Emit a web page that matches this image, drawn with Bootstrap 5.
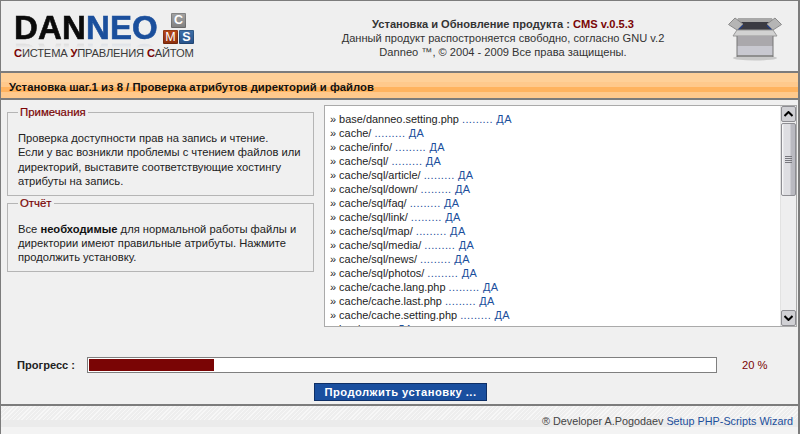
<!DOCTYPE html>
<html lang="ru">
<head>
<meta charset="utf-8">
<title>Danneo</title>
<link href="https://cdn.jsdelivr.net/npm/bootstrap@5.3.0/dist/css/bootstrap.min.css" rel="stylesheet">
<style>
html,body{height:434px;overflow:hidden}
body{font-family:"Liberation Sans",Arial,sans-serif;font-size:11.2px;line-height:14px;color:#222;background:#f0f0f0}
.shell{height:434px;border:solid #7c7c7c;border-width:1px 1px 0 1px;border-right-width:2px}
.head{height:72px;background:#efefef;border-bottom:2px solid #7c7c7c;flex:none}
.logo-wrap{width:260px;padding:9px 0 0 13px;flex:none}
.logo-top{height:36px;gap:5px}
.logo-word{font-size:33px;line-height:36px;font-weight:700;letter-spacing:.15px;color:#0b0b0b;-webkit-text-stroke:.6px currentColor;-webkit-box-reflect:below -9px linear-gradient(transparent 70%,rgba(0,0,0,.22))}
.logo-word b{color:#1b4f9c;font-weight:700}
.cube-grid{width:31px;display:grid;grid-template-columns:15px 15px;grid-template-rows:15px 14px;gap:2px 1px;margin-top:3px;height:31px}
.cube{display:flex;align-items:center;justify-content:center;color:#fff;font-size:12.5px;line-height:1;border-radius:1px;box-shadow:inset 0 0 0 1px rgba(0,0,0,.18)}
.cube-c{grid-column:1/span 2;width:15px;height:15px;background:linear-gradient(#a4a4a4,#808080);margin-left:8px;font-weight:700}
.cube-m{background:linear-gradient(#b8481a,#8c2f0d)}
.cube-s{background:linear-gradient(#3f70a8,#27528a);font-weight:700}
.logo-sub{font-size:11.2px;line-height:14px;margin-top:0;color:#3a3a3a;letter-spacing:-.2px;white-space:nowrap}
.logo-sub b{color:#7a0505;font-weight:700}
.head-text{font-size:11.1px;line-height:14px;color:#333;text-align:center;padding:16px 0 0 0;width:340px;margin-left:72px;white-space:nowrap}
.head-text strong{color:#333;font-weight:700}
.head-text em{font-style:normal;font-weight:700;color:#7a0505}
.box-ico{margin:16px 0 0 55px;flex:none}
.band{height:27px;flex:none;border-bottom:2px solid #7c7c7c;background:linear-gradient(#ffd098 0,#ffd098 9px,#ffc98c 9px,#ffc98c 14px,#ffb35f 14px,#ffb35f 19px,#ffc98c 19px,#ffc98c 100%);font-weight:700;font-size:11.3px;color:#111;padding:7px 0 0 8px}
.content{flex:none;height:227px;background:#f0f0f0}
.side{width:307px;margin:0 0 0 6px;flex:none}
.note{border:1px solid #b5b5b5;margin:6px 0 0;padding:0 0 0 10px;min-width:0}
.note + .note{margin-top:1px}
.note legend{float:none;width:auto;font-size:11.4px;line-height:13px;color:#7a0505;font-weight:400;margin:0;padding:0 2px;-webkit-text-stroke:.2px #7a0505}
.note-body{margin:12px 8px 6px 0;font-size:11.2px;line-height:14.4px;color:#222}
.note-body b{color:#111}
.listbox{width:473px;height:222px;margin:5px 0 0 10px;border:1px solid #aaa;background:#fff;flex:none}
.listrows{flex:1;overflow:hidden;padding:6px 0 0 5px;font-size:10.95px;line-height:14px;white-space:nowrap;color:#1d1d1d}
.listrows span{color:#1b4f9c;letter-spacing:.4px}
.sb{width:16px;flex:none;background:#eeeeef;border-left:1px solid #e2e2e2}
.sb-btn{height:16px;background:#d0d0d4;border:1px solid #8d8d92;border-radius:2px;display:flex;align-items:center;justify-content:center;flex:none}
.sb-thumb{height:73px;margin-top:1px;background:linear-gradient(90deg,#fff 0,#dedee2 2px,#dedee2 8px,#b9b9c0 9px,#b9b9c0 13px,#fff 15px);border:1px solid #8d8d92;border-radius:2px;display:flex;align-items:center;justify-content:center;flex:none}
.grip{width:7px;height:8px;background:repeating-linear-gradient(#77777d 0,#77777d 1px,transparent 1px,transparent 2px)}
.prog{flex:none;height:77px;background:#f0f0f0;overflow:hidden}
.prog-row{height:16px;margin-top:30px;padding-left:16px}
.prog-label{width:70px;flex:none;font-weight:700;color:#222;font-size:11.1px}
.track{width:630px;height:16px;border:1px solid #7f7f7f;background:#fff;padding:1px;flex:none}
.fill{height:100%;background:#7a0505}
.pct{margin-left:25px;color:#7a0505;font-size:11.2px}
.go{display:block;width:173px;height:18px;margin:10px 0 0 313px;padding:0 0 1px;border:1px solid #0e2f66;border-radius:0;background:#1a4f9f;color:#fff;font:700 11.2px/14px "Liberation Sans",Arial,sans-serif;letter-spacing:.45px}
.foot{flex:1;min-height:0;border-top:2px solid #7c7c7c;background:repeating-linear-gradient(135deg,rgba(255,255,255,.55) 0,rgba(255,255,255,.55) 1px,transparent 1px,transparent 3px) 0 0/100% 14px no-repeat,linear-gradient(#eeeeee 0,#eeeeee 14px,#ebebeb 14px,#ebebeb 21px,#f3f3f3 21px);padding:8px 5px 0 0;text-align:right;font-size:10.8px;color:#444}
.foot span{color:#1b4f9c}
</style>
</head>
<body>
<div class="shell d-flex flex-column">
  <div class="head d-flex">
    <div class="logo-wrap">
      <div class="logo-top d-flex">
        <div class="logo-word">DAN<b>NEO</b></div>
        <div class="cube-grid">
          <div class="cube cube-c">C</div>
          <div class="cube cube-m">M</div>
          <div class="cube cube-s">S</div>
        </div>
      </div>
      <div class="logo-sub"><b>С</b>ИСТЕМА <b>У</b>ПРАВЛЕНИЯ <b>С</b>АЙТОМ</div>
    </div>
    <div class="head-text">
      <div><strong>Установка и Обновление продукта :</strong> <em>CMS v.0.5.3</em></div>
      <div>Данный продукт распостроняется свободно, согласно GNU v.2</div>
      <div>Danneo ™, © 2004 - 2009 Все права защищены.</div>
    </div>
    <svg class="box-ico" width="54" height="44" viewBox="0 0 54 44">
      <ellipse cx="27" cy="41" rx="22" ry="2.5" fill="#c9c9c9"/>
      <path d="M10 1H44L46 6H8Z" fill="#a8a8a8"/>
      <path d="M9 5H45V13H9Z" fill="#3a3a42"/>
      <path d="M10 13L15 8M44 13L39 8" stroke="#25408a" stroke-width="1.5"/>
      <path d="M0.5 7.5L7 1L15 7L9 13Z" fill="#b5b5b5" stroke="#8a8a8a"/>
      <path d="M53.5 7.5L47 1L39 7L45 13Z" fill="#b5b5b5" stroke="#8a8a8a"/>
      <path d="M9 13H45L49 19H5Z" fill="#d2d2d2" stroke="#999"/>
      <rect x="9" y="19" width="36" height="21" fill="#c8c8d0"/>
      <rect x="9" y="19" width="36" height="10" fill="#aaa8ac"/>
      <rect x="9" y="38" width="36" height="2" fill="#8f8f8f"/>
      <path d="M9 19V40M45 19V40" stroke="#777"/>
    </svg>
  </div>
  <div class="band">Установка шаг.1 из 8 / Проверка атрибутов директорий и файлов</div>
  <div class="content d-flex">
    <div class="side">
      <fieldset class="note">
        <legend>Примечания</legend>
        <div class="note-body">Проверка доступности прав на запись и чтение.<br>Если у вас возникли проблемы с чтением файлов или директорий, выставите соответствующие хостингу атрибуты на запись.</div>
      </fieldset>
      <fieldset class="note">
        <legend>Отчёт</legend>
        <div class="note-body">Все <b>необходимые</b> для нормальной работы файлы и директории имеют правильные атрибуты. Нажмите продолжить установку.</div>
      </fieldset>
    </div>
    <div class="listbox d-flex">
      <div class="listrows">
        <div>» base/danneo.setting.php <span>......... ДА</span></div>
        <div>» cache/ <span>......... ДА</span></div>
        <div>» cache/info/ <span>......... ДА</span></div>
        <div>» cache/sql/ <span>......... ДА</span></div>
        <div>» cache/sql/article/ <span>......... ДА</span></div>
        <div>» cache/sql/down/ <span>......... ДА</span></div>
        <div>» cache/sql/faq/ <span>......... ДА</span></div>
        <div>» cache/sql/link/ <span>......... ДА</span></div>
        <div>» cache/sql/map/ <span>......... ДА</span></div>
        <div>» cache/sql/media/ <span>......... ДА</span></div>
        <div>» cache/sql/news/ <span>......... ДА</span></div>
        <div>» cache/sql/photos/ <span>......... ДА</span></div>
        <div>» cache/cache.lang.php <span>......... ДА</span></div>
        <div>» cache/cache.last.php <span>......... ДА</span></div>
        <div>» cache/cache.setting.php <span>......... ДА</span></div>
        <div>» img/ <span>......... ДА</span></div>
      </div>
      <div class="sb d-flex flex-column">
        <div class="sb-btn"><svg width="9" height="6" viewBox="0 0 9 6"><path d="M0.5 5L4.5 1L8.5 5" fill="none" stroke="#000" stroke-width="2"/></svg></div>
        <div class="sb-thumb"><div class="grip"></div></div>
        <div class="flex-grow-1"></div>
        <div class="sb-btn"><svg width="9" height="6" viewBox="0 0 9 6"><path d="M0.5 1L4.5 5L8.5 1" fill="none" stroke="#000" stroke-width="2"/></svg></div>
      </div>
    </div>
  </div>
  <div class="prog">
    <div class="prog-row d-flex align-items-center">
      <div class="prog-label">Прогресс :</div>
      <div class="track"><div class="fill" style="width:20%"></div></div>
      <div class="pct">20 %</div>
    </div>
    <button type="button" class="btn go">Продолжить установку ...</button>
  </div>
  <div class="foot">® Developer A.Pogodaev <span>Setup PHP-Scripts Wizard</span></div>
</div>
<script src="https://cdn.jsdelivr.net/npm/bootstrap@5.3.0/dist/js/bootstrap.bundle.min.js"></script>
</body>
</html>
